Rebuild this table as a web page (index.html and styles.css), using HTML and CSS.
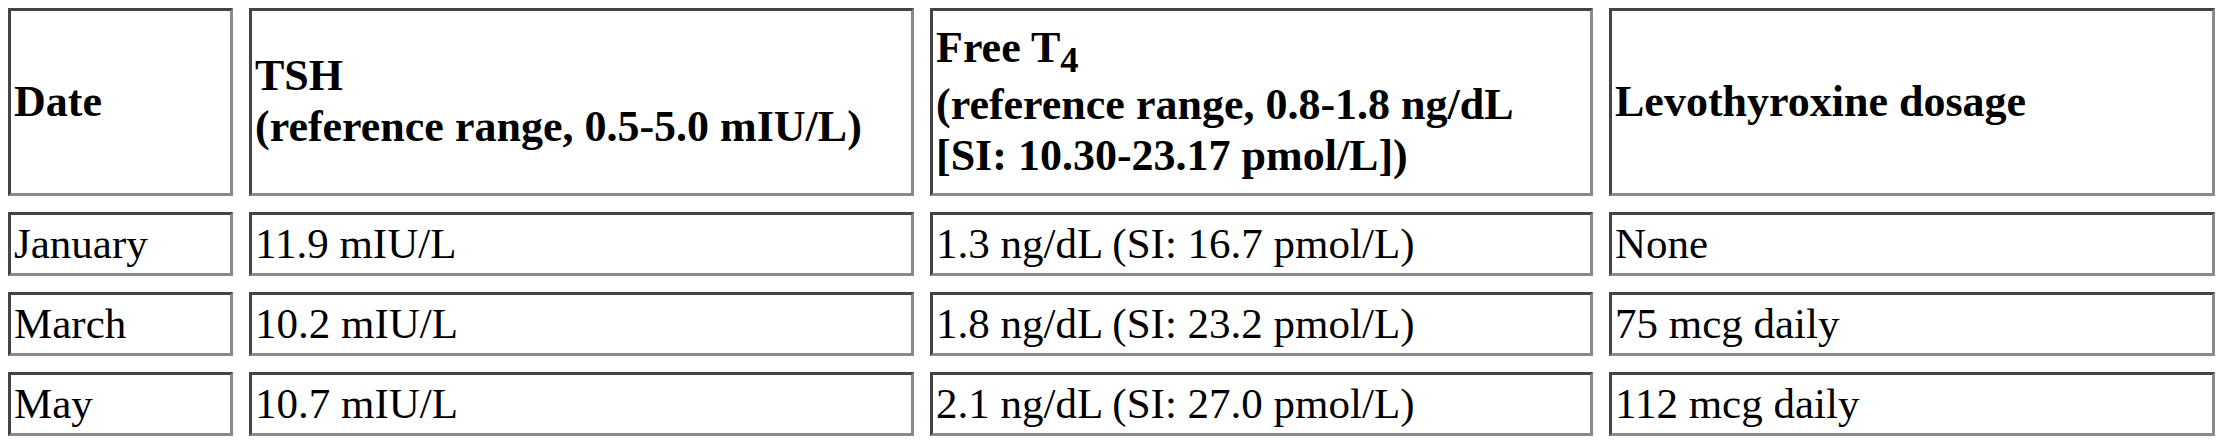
FILE: index.html
```html
<!DOCTYPE html>
<html lang="en">
<head>
<meta charset="utf-8">
<title>Thyroid function tests</title>
<link rel="stylesheet" href="styles.css">
</head>
<body>
<table class="labs">
  <colgroup>
    <col class="c-date">
    <col class="c-tsh">
    <col class="c-t4">
    <col class="c-dose">
  </colgroup>
  <thead>
    <tr class="head-row">
      <th>Date</th>
      <th>TSH<br>(reference range, 0.5-5.0 mIU/L)</th>
      <th>Free T<sub>4</sub><br>(reference range, 0.8-1.8 ng/dL<br>[SI: 10.30-23.17 pmol/L])</th>
      <th>Levothyroxine dosage</th>
    </tr>
  </thead>
  <tbody>
    <tr class="data-row">
      <td>January</td>
      <td>11.9 mIU/L</td>
      <td>1.3 ng/dL (SI: 16.7 pmol/L)</td>
      <td>None</td>
    </tr>
    <tr class="data-row">
      <td>March</td>
      <td>10.2 mIU/L</td>
      <td>1.8 ng/dL (SI: 23.2 pmol/L)</td>
      <td>75 mcg daily</td>
    </tr>
    <tr class="data-row">
      <td>May</td>
      <td>10.7 mIU/L</td>
      <td>2.1 ng/dL (SI: 27.0 pmol/L)</td>
      <td>112 mcg daily</td>
    </tr>
  </tbody>
</table>
</body>
</html>
```

FILE: styles.css
```css
html {
  overflow: hidden;
  background: #ffffff;
}

body {
  margin: 0;
  font-family: "Liberation Serif", "Times New Roman", serif;
  color: #000000;
}

.labs {
  border-collapse: separate;
  border-spacing: 16px;
  margin: -8px 0 0 -8px;
  table-layout: fixed;
  width: 2239px;
}

.c-date { width: 225px; }
.c-tsh { width: 665px; }
.c-t4 { width: 663px; }
.c-dose { width: 606px; }

.labs th,
.labs td {
  box-sizing: border-box;
  border-style: solid;
  border-width: 3px;
  border-color: #444444 #8a8a8a #8a8a8a #444444;
  padding: 3px 3px;
  text-align: left;
  vertical-align: middle;
  white-space: nowrap;
  line-height: 1.15;
}

.labs th {
  font-size: 44px;
  font-weight: bold;
}

.labs td {
  font-size: 43px;
  font-weight: normal;
}

.head-row {
  height: 188px;
}

.data-row {
  height: 64px;
}

.labs sub {
  font-size: 0.83em;
  vertical-align: sub;
}
```
